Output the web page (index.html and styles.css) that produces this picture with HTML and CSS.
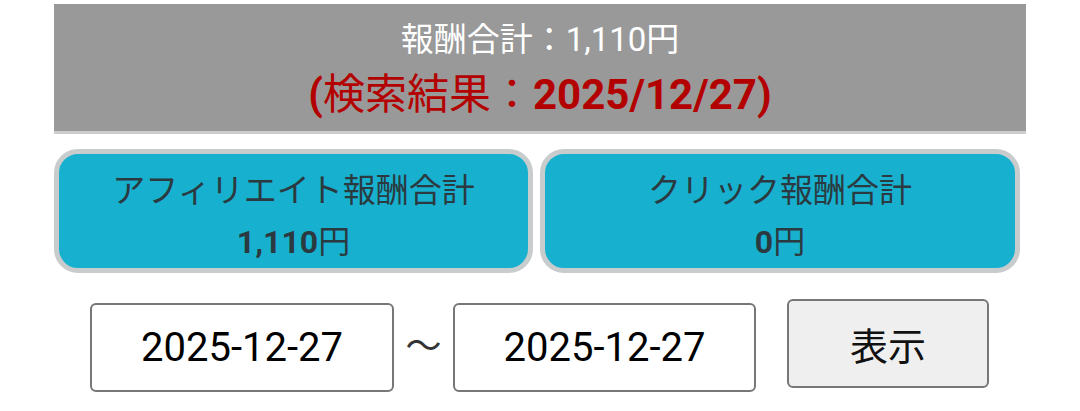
FILE: index.html
```html
<!DOCTYPE html>
<html lang="ja">
<head>
<meta charset="utf-8">
<title>報酬合計</title>
<link rel="stylesheet" href="styles.css">
</head>
<body>
<div class="page">
  <div class="summary">
    <div class="summary-total">報酬合計：1,110円</div>
    <div class="summary-date">(<span class="cjk">検索結果：</span>2025/12/27)</div>
  </div>
  <div class="cards">
    <div class="card card-left">
      <div class="card-title">アフィリエイト報酬合計</div>
      <div class="card-value">1,110<span class="cjk">円</span></div>
    </div>
    <div class="card card-right">
      <div class="card-title">クリック報酬合計</div>
      <div class="card-value">0<span class="cjk">円</span></div>
    </div>
  </div>
  <div class="search">
    <input class="date-input" type="text" value="2025-12-27">
    <span class="tilde">〜</span>
    <input class="date-input date-input-to" type="text" value="2025-12-27">
    <button class="show-btn" type="button">表示</button>
  </div>
</div>
</body>
</html>
```

FILE: styles.css
```css
html, body {
  margin: 0;
  padding: 0;
  background: #ffffff;
}

body {
  font-family: Roboto, "Noto Sans CJK JP", sans-serif;
  padding-top: 4px;
}

.page {
  width: 972px;
  margin: 0 auto;
}

.summary {
  background: #999999;
  border-bottom: 3px solid #cccccc;
  padding: 16px 0 11px;
  text-align: center;
}

.summary-total {
  color: #ffffff;
  font-size: 33px;
  line-height: 40px;
}

.summary-date {
  color: #b30000;
  font-size: 42px;
  line-height: 50px;
  font-weight: 700;
  margin-top: 10px;
}

.cjk {
  font-weight: 400;
}

.cards {
  display: flex;
  margin-top: 15px;
}

.card {
  width: 479px;
  box-sizing: border-box;
  height: 124px;
  background: #17b1cf;
  border: 5px solid #c9cccd;
  border-radius: 24px;
  padding-top: 11px;
  text-align: center;
  color: #2b3a40;
}

.card-left {
  margin-right: 7px;
}

.card-right {
  width: 480px;
}

.card-title {
  font-size: 33px;
  line-height: 52px;
}

.card-value {
  font-size: 32px;
  line-height: 50px;
  font-weight: 700;
}

.search {
  display: flex;
  align-items: flex-start;
  margin: 26px 0 0 36px;
}

.date-input {
  width: 304px;
  height: 89px;
  box-sizing: border-box;
  margin-top: 4px;
  border: 2px solid #777777;
  border-radius: 6px;
  background: #ffffff;
  font-family: Roboto, "Noto Sans CJK JP", sans-serif;
  font-size: 40px;
  color: #000000;
  text-align: center;
  padding: 0;
  outline: none;
}

.date-input-to {
  width: 303px;
}

.tilde {
  width: 59px;
  text-align: center;
  font-size: 36px;
  line-height: 89px;
  margin-top: 4px;
  color: #333333;
}

.show-btn {
  width: 202px;
  height: 89px;
  margin-left: 31px;
  box-sizing: border-box;
  border: 2px solid #777777;
  border-radius: 6px;
  background: #efefef;
  font-family: Roboto, "Noto Sans CJK JP", sans-serif;
  font-size: 38px;
  color: #111111;
  padding: 0;
}
```
